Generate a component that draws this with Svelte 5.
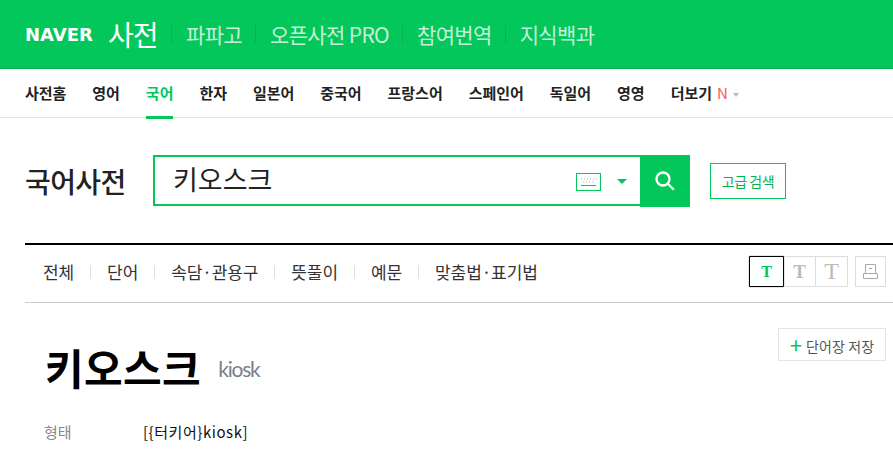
<script>
  const services = ['파파고', '오픈사전 PRO', '참여번역', '지식백과'];
  const menu = ['사전홈', '영어', '국어', '한자', '일본어', '중국어', '프랑스어', '스페인어', '독일어', '영영'];
  const tabs = ['전체', '단어', '속담·관용구', '뜻풀이', '예문', '맞춤법·표기법'];
</script>

<div class="page">
  <header class="top">
    <span class="naver">NAVER</span>
    <span class="dict">사전</span>
    {#each services as s}
      <span class="sep"></span>
      <span class="service">{s}</span>
    {/each}
  </header>

  <nav class="menu">
    {#each menu as m}
      <span class="item" class:on={m === '국어'}>{m}</span>
    {/each}
    <span class="item">더보기<i class="new">N</i><i class="caret"></i></span>
  </nav>

  <section class="search">
    <h2>국어사전</h2>
    <div class="box">
      <span class="query">키오스크</span>
      <svg class="kbd" width="25" height="18" viewBox="0 0 25 18">
        <rect x="0.5" y="0.5" width="24" height="17" fill="#fff" stroke="#03c75a"/>
        <path d="M5 6h1M8 6h1M11 6h1M14 6h1M17 6h1M20 6h1M7 9h1M10 9h1M13 9h1M16 9h1" stroke="#6fd79c"/>
        <path d="M5 12.5h15" stroke="#03c75a"/>
      </svg>
      <i class="down"></i>
    </div>
    <button class="go" aria-label="검색">
      <svg width="20" height="20" viewBox="0 0 20 20" fill="none" stroke="#fff" stroke-width="2.3">
        <circle cx="8" cy="8" r="6.5"/>
        <path d="M12.8 12.8l6 6"/>
      </svg>
    </button>
    <button class="adv">고급 검색</button>
  </section>

  <div class="tabs">
    {#each tabs as t, i}
      {#if i > 0}<span class="bar"></span>{/if}
      <span class="tab">{t}</span>
    {/each}
    <div class="tools">
      <span class="t sel s1">T</span>
      <span class="t s2">T</span>
      <span class="t s3">T</span>
      <span class="t print">
        <svg width="15" height="15" viewBox="0 0 15 15" fill="none" stroke="#aaa">
          <path d="M2.5 9V.5h10V9M.5 9.5h14v5H.5z"/>
          <path d="M6 4.5h3" />
        </svg>
      </span>
    </div>
  </div>

  <main class="entry">
    <div class="head">
      <h1>키오스크</h1>
      <span class="orig">kiosk</span>
      <button class="save"><b>+</b>단어장 저장</button>
    </div>
    <div class="row">
      <span class="label">형태</span>
      <span class="val">[{'{'}터키어{'}'}kiosk]</span>
    </div>
  </main>
</div>

<style>
  :global(body) {
    background: #fff;
  }
  .page {
    width: 893px;
    height: 455px;
    overflow: hidden;
    font-family: "Noto Sans CJK KR", "Noto Sans", sans-serif;
    color: #222;
  }
  .top {
    height: 68px;
    background: #03c75a;
    border-bottom: 1px solid #02b350;
    display: flex;
    align-items: center;
    padding-left: 25px;
  }
  .naver {
    font-family: "DejaVu Sans", sans-serif;
    font-weight: 700;
    font-size: 18px;
    color: #fff;
    width: 83px;
  }
  .dict {
    font-size: 28px;
    color: #fff;
    width: 63px;
    letter-spacing: -1px;
  }
  .sep {
    width: 1px;
    height: 18px;
    background: #02b350;
    margin-right: 14px;
  }
  .service {
    font-size: 21px;
    color: #c5f0d8;
    margin-right: 13px;
    letter-spacing: -0.65px;
  }
  .menu {
    height: 48px;
    border-bottom: 1px solid #e5e5e5;
    display: flex;
    gap: 26px;
    padding-left: 25px;
  }
  .item {
    position: relative;
    font-size: 15px;
    font-weight: 700;
    line-height: 47px;
    letter-spacing: -0.03px;
    color: #222;
  }
  .item.on {
    color: #03c75a;
    border-bottom: 3px solid #03c75a;
    height: 47px;
  }
  .new {
    font-style: normal;
    font-weight: 400;
    color: #fa5a64;
    margin-left: 5px;
    font-size: 15px;
  }
  .caret {
    display: inline-block;
    margin-left: 5px;
    vertical-align: 2px;
    border: 3px solid transparent;
    border-top: 4px solid #bbb;
    border-bottom: 0;
  }
  .search {
    display: flex;
    align-items: flex-start;
    padding: 37px 0 0 25px;
    height: 88px;
    box-sizing: content-box;
  }
  h2 {
    margin: 0;
    width: 128px;
    font-size: 28px;
    font-weight: 500;
    line-height: 52px;
    letter-spacing: -0.6px;
    color: #222;
  }
  .box {
    width: 487px;
    height: 51px;
    box-sizing: border-box;
    border: 2px solid #03c75a;
    border-right: 0;
    display: flex;
    align-items: center;
    padding-left: 18px;
  }
  .query {
    flex: 1;
    font-size: 27px;
    line-height: 40px;
    color: #222;
    margin-top: -4px;
  }
  .kbd {
    margin-right: 16px;
    margin-top: 2px;
  }
  .down {
    border: 5px solid transparent;
    border-top: 5px solid #03c75a;
    border-bottom: 0;
    margin-right: 13px;
    margin-top: 1px;
  }
  .go {
    width: 50px;
    height: 52px;
    background: #03c75a;
    border: 0;
    padding: 0;
    display: flex;
    align-items: center;
    justify-content: center;
  }
  .adv {
    margin: 8px 0 0 20px;
    width: 76px;
    height: 36px;
    padding: 0;
    background: #fff;
    border: 1px solid #03c75a;
    color: #03b352;
    font-family: inherit;
    font-size: 14px;
    letter-spacing: -0.4px;
  }
  .tabs {
    margin: 0 0 0 25px;
    height: 53px;
    border-top: 2px solid #000;
    border-bottom: 1px solid #ccc;
    display: flex;
    align-items: center;
    padding: 0 0 4px 18px;
  }
  .tab {
    font-size: 17px;
    color: #333;
    letter-spacing: -0.1px;
  }
  .bar {
    width: 1px;
    height: 14px;
    background: #ddd;
    margin: 0 16px;
  }
  .tools {
    margin-left: auto;
    margin-right: 7px;
    display: flex;
    align-items: center;
  }
  .t {
    box-sizing: border-box;
    display: flex;
    align-items: center;
    justify-content: center;
    height: 31px;
    border: 1px solid #ddd;
    font-family: "Liberation Serif", serif;
    font-weight: 700;
    color: #bbb;
  }
  .s1 { width: 35px; font-size: 16px; }
  .s2 { width: 32px; font-size: 19px; border-left: 0; }
  .s3 { width: 32px; font-size: 24px; border-left: 0; font-weight: 400; }
  .sel {
    border: 1px solid #000;
    border-radius: 1px;
    box-shadow: 0 0 1px #000;
    background: #fbfffd;
    color: #03c75a;
  }
  .print {
    width: 31px;
    margin-left: 7px;
  }
  .entry {
    padding: 25px 7px 0 25px;
  }
  .head {
    display: flex;
    align-items: flex-start;
    height: 93px;
    padding-left: 20px;
  }
  h1 {
    margin: 9px 0 0;
    font-size: 42px;
    font-weight: 700;
    line-height: 60px;
    color: #000;
    letter-spacing: 0.4px;
  }
  .orig {
    margin: 27px 0 0 17px;
    font-size: 21px;
    line-height: 28px;
    color: #78808a;
    letter-spacing: -1.2px;
    font-family: Lato, "Noto Sans", sans-serif;
  }
  .save {
    margin-left: auto;
    width: 108px;
    height: 33px;
    padding: 0;
    background: #fff;
    border: 1px solid #e5e5e5;
    font-family: inherit;
    font-size: 14px;
    letter-spacing: 0.1px;
    color: #555;
  }
  .save b {
    font-weight: 400;
    font-size: 22px;
    line-height: 20px;
    color: #03c75a;
    margin-right: 4px;
    vertical-align: -2px;
  }
  .row {
    display: flex;
    padding-left: 19px;
    font-size: 15px;
    line-height: 22px;
  }
  .label {
    width: 99px;
    color: #888;
  }
  .val {
    color: #111;
    letter-spacing: 0.55px;
  }
</style>
